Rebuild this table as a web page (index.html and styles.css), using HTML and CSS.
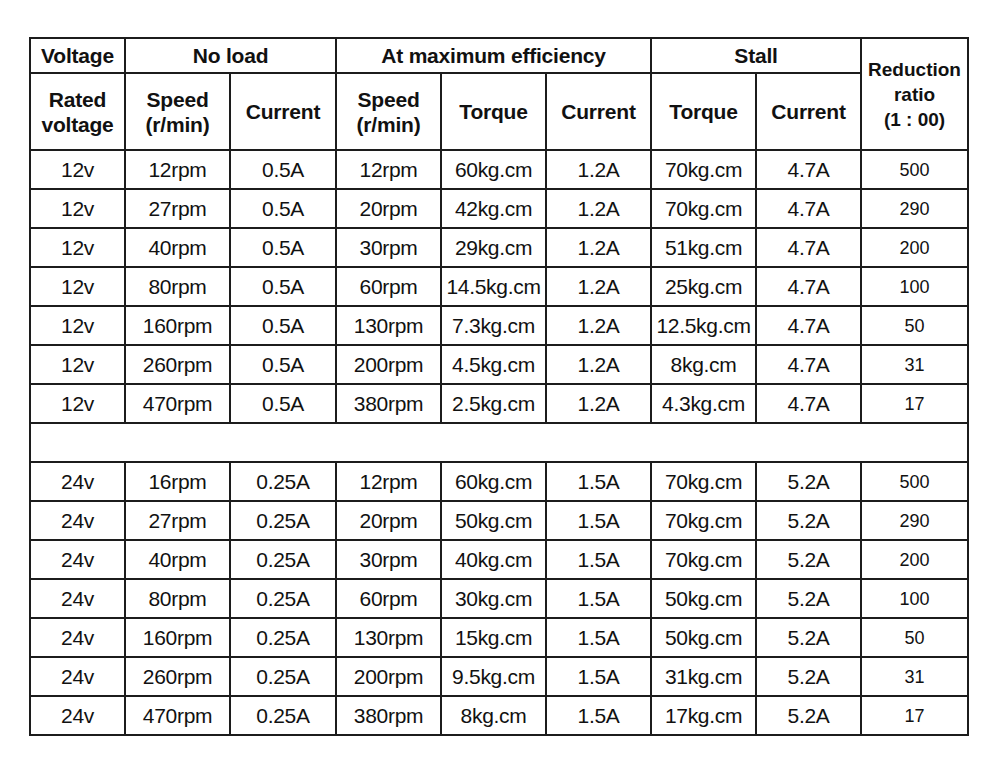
FILE: index.html
```html
<!DOCTYPE html>
<html>
<head>
<meta charset="utf-8">
<link rel="stylesheet" href="styles.css">
</head>
<body>
<table class="spec">
  <colgroup>
    <col class="c-volt">
    <col class="c-std">
    <col class="c-std2">
    <col class="c-std">
    <col class="c-std">
    <col class="c-std">
    <col class="c-std">
    <col class="c-std">
    <col class="c-last">
  </colgroup>
  <thead>
    <tr class="h1">
      <th>Voltage</th>
      <th colspan="2">No load</th>
      <th colspan="3">At maximum efficiency</th>
      <th colspan="2">Stall</th>
      <th rowspan="2" class="small">Reduction<br>ratio<br>(1 : 00)</th>
    </tr>
    <tr class="h2">
      <th>Rated<br>voltage</th>
      <th>Speed<br>(r/min)</th>
      <th>Current</th>
      <th>Speed<br>(r/min)</th>
      <th>Torque</th>
      <th>Current</th>
      <th>Torque</th>
      <th>Current</th>
    </tr>
  </thead>
  <tbody>
    <tr><td>12v</td><td>12rpm</td><td>0.5A</td><td>12rpm</td><td>60kg.cm</td><td>1.2A</td><td>70kg.cm</td><td>4.7A</td><td class="small">500</td></tr>
    <tr><td>12v</td><td>27rpm</td><td>0.5A</td><td>20rpm</td><td>42kg.cm</td><td>1.2A</td><td>70kg.cm</td><td>4.7A</td><td class="small">290</td></tr>
    <tr><td>12v</td><td>40rpm</td><td>0.5A</td><td>30rpm</td><td>29kg.cm</td><td>1.2A</td><td>51kg.cm</td><td>4.7A</td><td class="small">200</td></tr>
    <tr><td>12v</td><td>80rpm</td><td>0.5A</td><td>60rpm</td><td>14.5kg.cm</td><td>1.2A</td><td>25kg.cm</td><td>4.7A</td><td class="small">100</td></tr>
    <tr><td>12v</td><td>160rpm</td><td>0.5A</td><td>130rpm</td><td>7.3kg.cm</td><td>1.2A</td><td>12.5kg.cm</td><td>4.7A</td><td class="small">50</td></tr>
    <tr><td>12v</td><td>260rpm</td><td>0.5A</td><td>200rpm</td><td>4.5kg.cm</td><td>1.2A</td><td>8kg.cm</td><td>4.7A</td><td class="small">31</td></tr>
    <tr><td>12v</td><td>470rpm</td><td>0.5A</td><td>380rpm</td><td>2.5kg.cm</td><td>1.2A</td><td>4.3kg.cm</td><td>4.7A</td><td class="small">17</td></tr>
    <tr><td colspan="9"></td></tr>
    <tr><td>24v</td><td>16rpm</td><td>0.25A</td><td>12rpm</td><td>60kg.cm</td><td>1.5A</td><td>70kg.cm</td><td>5.2A</td><td class="small">500</td></tr>
    <tr><td>24v</td><td>27rpm</td><td>0.25A</td><td>20rpm</td><td>50kg.cm</td><td>1.5A</td><td>70kg.cm</td><td>5.2A</td><td class="small">290</td></tr>
    <tr><td>24v</td><td>40rpm</td><td>0.25A</td><td>30rpm</td><td>40kg.cm</td><td>1.5A</td><td>70kg.cm</td><td>5.2A</td><td class="small">200</td></tr>
    <tr><td>24v</td><td>80rpm</td><td>0.25A</td><td>60rpm</td><td>30kg.cm</td><td>1.5A</td><td>50kg.cm</td><td>5.2A</td><td class="small">100</td></tr>
    <tr><td>24v</td><td>160rpm</td><td>0.25A</td><td>130rpm</td><td>15kg.cm</td><td>1.5A</td><td>50kg.cm</td><td>5.2A</td><td class="small">50</td></tr>
    <tr><td>24v</td><td>260rpm</td><td>0.25A</td><td>200rpm</td><td>9.5kg.cm</td><td>1.5A</td><td>31kg.cm</td><td>5.2A</td><td class="small">31</td></tr>
    <tr><td>24v</td><td>470rpm</td><td>0.25A</td><td>380rpm</td><td>8kg.cm</td><td>1.5A</td><td>17kg.cm</td><td>5.2A</td><td class="small">17</td></tr>
  </tbody>
</table>
</body>
</html>
```

FILE: styles.css
```css
html, body {
  margin: 0;
  padding: 0;
  background: #ffffff;
}

body {
  font-family: "Liberation Sans", Arial, sans-serif;
  color: #111111;
}

.spec {
  border-collapse: collapse;
  table-layout: fixed;
  width: 938px;
  margin: 37px 0 0 29px;
  border: 2px solid #1c1c1c;
}

.c-volt { width: 95px; }
.c-std { width: 105px; }
.c-std2 { width: 106px; }
.c-last { width: 107px; }

.spec th,
.spec td {
  border: 2px solid #1c1c1c;
  padding: 0;
  text-align: center;
  vertical-align: middle;
  white-space: nowrap;
}

.spec th {
  font-weight: bold;
  font-size: 21px;
  line-height: 25px;
  letter-spacing: -0.2px;
}

.spec td {
  font-size: 21px;
  line-height: 24px;
  letter-spacing: -0.3px;
}

.spec td.small {
  font-size: 18px;
  letter-spacing: 0;
}

.spec th.small {
  font-size: 19px;
  letter-spacing: 0;
}

.h1 { height: 35px; }
.h2 { height: 77px; }
.spec tbody tr { height: 39px; }
```
